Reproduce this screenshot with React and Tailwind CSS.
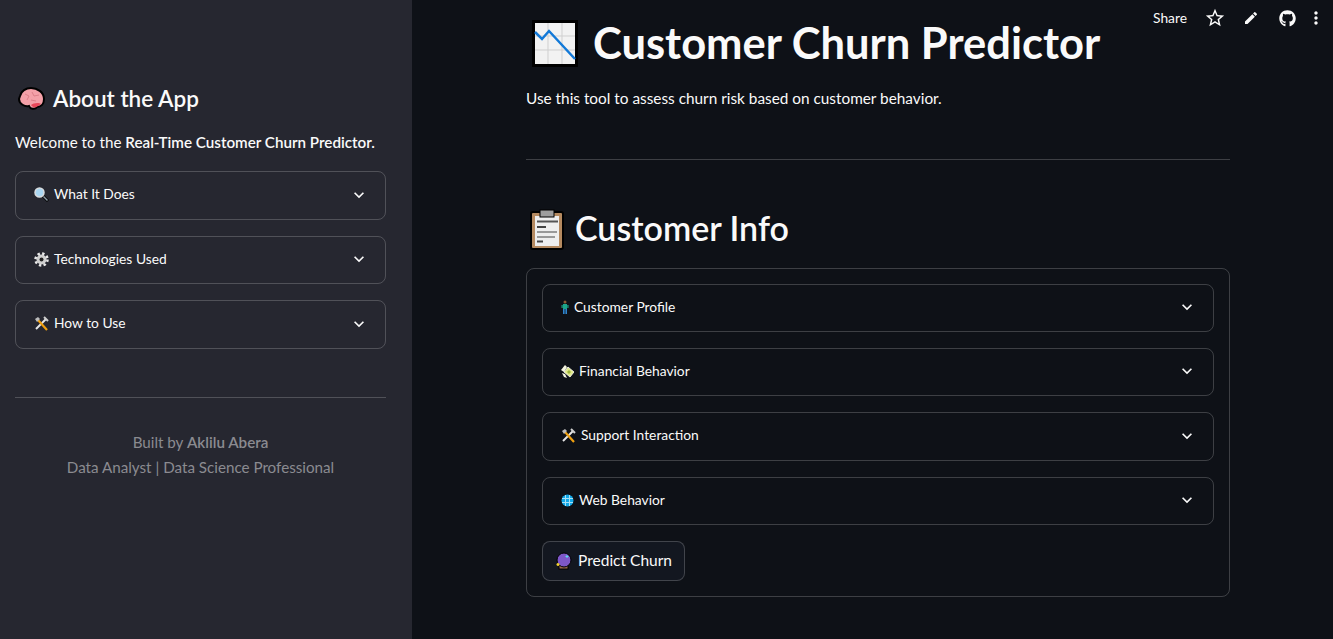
import { MdExpandMore, MdStarBorder, MdEdit, MdMoreVert } from "react-icons/md";
import { FaGithub } from "react-icons/fa";

function ChartIcon() {
    return (
        <svg width="46" height="47" viewBox="0 0 46 47" className="shrink-0">
            <rect width="46" height="47" fill="#000" />
            <rect x="3" y="3" width="40" height="41" fill="#f2f2f2" />
            <path d="M16 3V44M30 3V44M3 16H43M3 30H43" stroke="#cfcfcf" strokeWidth="1" />
            <path d="M3 12L10 19L17 11L43 39" fill="none" stroke="#1279d8" strokeWidth="2.5" />
        </svg>
    );
}

function ClipboardIcon() {
    return (
        <svg width="34" height="42" viewBox="0 0 34 42" className="shrink-0">
            <rect x="1" y="4" width="32" height="37" rx="2" fill="#b58a60" stroke="#000" strokeWidth="2" />
            <rect x="5" y="8" width="24" height="30" fill="#eeeeee" />
            <rect x="10" y="2" width="14" height="7" fill="#9e9e9e" stroke="#000" strokeWidth="1" />
            <path d="M7 13.5H28" stroke="#555" strokeWidth="2" />
            <path d="M7 19H16" stroke="#444" strokeWidth="2" />
            <path d="M7 24H27M7 29H25" stroke="#444" strokeWidth="1" />
            <path d="M7 33.500H13" stroke="#444" strokeWidth="2" />
        </svg>
    );
}

function BrainIcon() {
    return (
        <svg width="28" height="24" viewBox="0 0 28 24" className="shrink-0">
            <path d="M3 9C4 4 9 1 14 1C20 1 27 5 27 12C27 17 24 20 20 20C18 23 13 22 12 19C8 20 2 17 2 12Z" fill="#f4a0a8" stroke="#000" strokeWidth="2" />
            <path d="M14 18C16 21 19 21 21 19L24 17C22 15 16 16 14 18Z" fill="#e8485a" />
            <path d="M8 7L12 9L10 13M15 5L17 9L22 8M14 13L19 14" fill="none" stroke="#dd7f89" strokeWidth="1" />
        </svg>
    );
}

function SearchIcon() {
    return (
        <svg width="15" height="15" viewBox="0 0 15 15" className="shrink-0">
            <path d="M9 9L14 14" stroke="#000" strokeWidth="3" />
            <path d="M9.500 9.500L13.500 13.500" stroke="#8b9aa5" strokeWidth="1.500" />
            <circle cx="5.500" cy="5.500" r="4.500" fill="#a9d6f2" stroke="#d9dde0" strokeWidth="1.500" />
        </svg>
    );
}

function GearIcon() {
    return (
        <svg width="15" height="15" viewBox="0 0 15 15" className="shrink-0">
            <circle cx="7.500" cy="7.500" r="5" fill="#d0d0d0" />
            <circle cx="7.500" cy="7.500" r="6" fill="none" stroke="#e8e8e8" strokeWidth="2.500" strokeDasharray="2.400 2.300" />
            <circle cx="7.500" cy="7.500" r="2" fill="#222" />
        </svg>
    );
}

function ToolsIcon() {
    return (
        <svg width="15" height="15" viewBox="0 0 15 15" className="shrink-0">
            <path d="M2 13L12 3" stroke="#e6e6e6" strokeWidth="2" />
            <path d="M10 1L14 5" stroke="#cfcfcf" strokeWidth="2" />
            <path d="M4 4L13 14" stroke="#f0a010" strokeWidth="2.200" />
            <path d="M1 3L4 1L6 3L3 6Z" fill="#bdbdbd" />
        </svg>
    );
}

function PersonIcon() {
    return (
        <svg width="8" height="15" viewBox="0 0 7 15" className="shrink-0">
            <circle cx="3.500" cy="2" r="1.500" fill="#8a5a33" />
            <rect x="1.500" y="4" width="4" height="5" fill="#1ba589" />
            <rect x="0" y="5" width="1.200" height="3" fill="#1ba589" />
            <rect x="5.800" y="5" width="1.200" height="3" fill="#1ba589" />
            <rect x="1.500" y="9" width="1.600" height="5" fill="#2f86d0" />
            <rect x="3.900" y="9" width="1.600" height="5" fill="#2f86d0" />
        </svg>
    );
}

function MoneyIcon() {
    return (
        <svg width="13" height="13" viewBox="0 0 13 13" className="shrink-0">
            <path d="M0 5L4 0L6 2L3 7Z" fill="#f4f4e0" />
            <path d="M3 7L7 2L13 7L9 12Z" fill="#dfe98c" stroke="#fff" strokeWidth="0.800" />
            <path d="M1 8L4 9L6 13L3 12Z" fill="#f4f4e0" />
            <path d="M6 7L8 5L10 7L8 9Z" fill="#9fb53c" />
        </svg>
    );
}

function GlobeIcon() {
    return (
        <svg width="13" height="13" viewBox="0 0 13 13" className="shrink-0">
            <circle cx="6.500" cy="6.500" r="6" fill="#12a8e8" />
            <path d="M1 4.500H12M1 8.500H12M4.500 1V12M8.500 1V12" stroke="#a5e2f8" strokeWidth="1" />
        </svg>
    );
}

function CrystalBallIcon() {
    return (
        <svg width="17" height="18" viewBox="0 0 17 18" className="shrink-0">
            <rect x="4" y="13" width="9" height="4" fill="#9c6b4e" stroke="#000" strokeWidth="1" />
            <circle cx="9" cy="8" r="7" fill="#7e57c8" stroke="#000" strokeWidth="1" />
            <path d="M12 3V6M10.500 4.500H13.500" stroke="#5fd8ee" strokeWidth="1" />
            <path d="M3 11V14M1.500 12.500H4.500" stroke="#f6d32d" strokeWidth="1.500" />
        </svg>
    );
}

function Expander({ icon, label, h = "h-[48px]" }) {
    return (
        <div className={`flex ${h} items-center justify-between rounded-lg border border-[#fafafa]/20 pb-[2px] pl-[18px] pr-[16px]`}>
            <div className="flex items-center gap-[5px] text-[13.8px] text-[#fafafa]">
                {icon}
                <span>{label}</span>
            </div>
            <MdExpandMore className="text-[20px] text-[#fafafa]" />
        </div>
    );
}

export default function App() {
    return (
        <div className="relative flex h-[639px] overflow-hidden bg-[#0e1117] font-['Lato',_'Noto_Sans',_sans-serif] text-[#fafafa]">
            <aside className="w-[412px] shrink-0 bg-[#262730] pl-[15px] pr-[26px] pt-[84px]">
                <div className="flex items-center gap-[8px] pl-[2px] text-[22.5px] font-semibold">
                    <BrainIcon />
                    <h2 className="leading-[30px]">About the App</h2>
                </div>
                <p className="mt-[16px] text-[15.2px] leading-[24px]">
                    Welcome to the <strong className="font-semibold">Real-Time Customer Churn Predictor.</strong>
                </p>
                <div className="mt-[17px] flex flex-col gap-[16px]">
                    <Expander icon={<SearchIcon />} label="What It Does" h="h-[49px]" />
                    <Expander icon={<GearIcon />} label="Technologies Used" />
                    <Expander icon={<ToolsIcon />} label="How to Use" h="h-[49px]" />
                </div>
                <hr className="mt-[48px] border-[#fafafa]/20" />
                <div className="mt-[32px] text-center text-[15.2px] leading-[25px] text-[#8b8b90]">
                    <p>Built by <strong className="font-semibold">Aklilu Abera</strong></p>
                    <p>Data Analyst | Data Science Professional</p>
                </div>
            </aside>

            <main className="flex-1 pl-[114px] pt-[19px]">
                <div className="w-[704px]">
                    <div className="flex items-center gap-[15px] pl-[6px]">
                        <ChartIcon />
                        <h1 className="pb-[2px] text-[43.5px] font-bold leading-[46px]">Customer Churn Predictor</h1>
                    </div>
                    <p className="mt-[19px] text-[15.35px] leading-[24px]">Use this tool to assess churn risk based on customer behavior.</p>
                    <hr className="mt-[49px] border-[#fafafa]/20" />
                    <div className="mt-[48px] flex items-center gap-[11px] pl-[4px]">
                        <ClipboardIcon />
                        <h2 className="pb-[2px] text-[34px] font-semibold leading-[40px]">Customer Info</h2>
                    </div>
                    <div className="mt-[18px] flex flex-col gap-[16px] rounded-lg border border-[#fafafa]/20 p-[15px]">
                        <Expander icon={<PersonIcon />} label="Customer Profile" />
                        <Expander icon={<MoneyIcon />} label="Financial Behavior" />
                        <Expander icon={<ToolsIcon />} label="Support Interaction" h="h-[49px]" />
                        <Expander icon={<GlobeIcon />} label="Web Behavior" />
                        <button className="flex h-[40px] w-[143px] items-center justify-center gap-[6px] rounded-lg border border-[#fafafa]/20 bg-[#131720] text-[15.5px]">
                            <CrystalBallIcon />
                            Predict Churn
                        </button>
                    </div>
                </div>
            </main>

            <div className="absolute right-[7px] top-[7px] flex items-center text-[#fafafa]">
                <span className="mr-[17px] text-[13.8px]">Share</span>
                <MdStarBorder className="mr-[17px] text-[22px]" />
                <MdEdit className="mr-[20px] text-[16px]" />
                <FaGithub className="mr-[10px] text-[17px]" />
                <MdMoreVert className="text-[20px]" />
            </div>
        </div>
    );
}
